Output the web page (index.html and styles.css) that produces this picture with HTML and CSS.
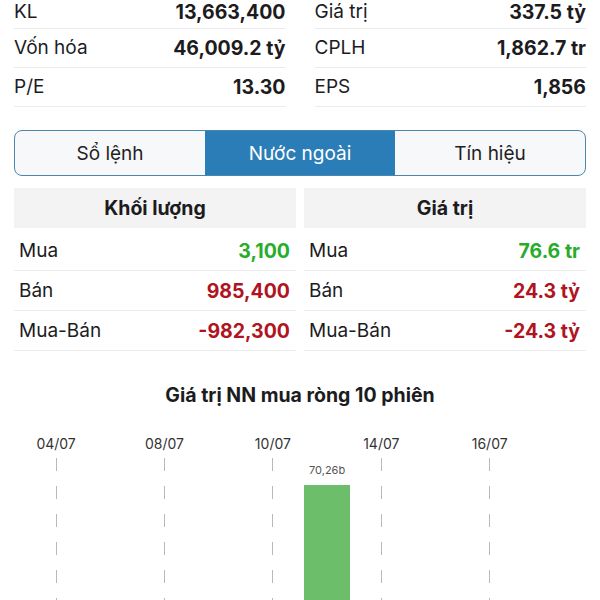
FILE: index.html
```html
<!DOCTYPE html>
<html lang="vi">
<head>
<meta charset="utf-8">
<link rel="stylesheet" href="styles.css">
</head>
<body>
<div class="page">
  <div class="stats">
    <div class="stat-col">
      <div class="stat-row"><span class="label">KL</span><span class="val">13,663,400</span></div>
      <div class="stat-row"><span class="label">Vốn hóa</span><span class="val">46,009.2 tỷ</span></div>
      <div class="stat-row"><span class="label">P/E</span><span class="val">13.30</span></div>
    </div>
    <div class="stat-col">
      <div class="stat-row"><span class="label">Giá trị</span><span class="val">337.5 tỷ</span></div>
      <div class="stat-row"><span class="label">CPLH</span><span class="val">1,862.7 tr</span></div>
      <div class="stat-row"><span class="label">EPS</span><span class="val">1,856</span></div>
    </div>
  </div>

  <div class="tabs">
    <div class="tab">Sổ lệnh</div>
    <div class="tab active">Nước ngoài</div>
    <div class="tab">Tín hiệu</div>
  </div>

  <div class="foreign">
    <div class="fcol">
      <div class="fhead">Khối lượng</div>
      <div class="frow"><span class="label">Mua</span><span class="val up">3,100</span></div>
      <div class="frow"><span class="label">Bán</span><span class="val down">985,400</span></div>
      <div class="frow"><span class="label">Mua-Bán</span><span class="val down">-982,300</span></div>
    </div>
    <div class="fcol">
      <div class="fhead">Giá trị</div>
      <div class="frow"><span class="label">Mua</span><span class="val up">76.6 tr</span></div>
      <div class="frow"><span class="label">Bán</span><span class="val down">24.3 tỷ</span></div>
      <div class="frow"><span class="label">Mua-Bán</span><span class="val down">-24.3 tỷ</span></div>
    </div>
  </div>

  <div class="chart">
    <h2 class="chart-title">Giá trị NN mua ròng 10 phiên</h2>
    <div class="plot">
      <div class="slot"><div class="date">04/07</div><div class="gridline"></div></div>
      <div class="slot"><div class="date"></div></div>
      <div class="slot"><div class="date">08/07</div><div class="gridline"></div></div>
      <div class="slot"><div class="date"></div></div>
      <div class="slot"><div class="date">10/07</div><div class="gridline"></div></div>
      <div class="slot">
        <div class="date"></div>
        <div class="bar-area">
          <div class="bar-label">70,26b</div>
          <div class="bar" style="height:115px"></div>
        </div>
      </div>
      <div class="slot"><div class="date">14/07</div><div class="gridline"></div></div>
      <div class="slot"><div class="date"></div></div>
      <div class="slot"><div class="date">16/07</div><div class="gridline"></div></div>
      <div class="slot"><div class="date"></div></div>
    </div>
  </div>
</div>
</body>
</html>
```
FILE: styles.css
```css
html, body {
  margin: 0;
  padding: 0;
  background: #ffffff;
  overflow: hidden;
}
body {
  font-family: "Inter", "Roboto", "Liberation Sans", sans-serif;
  color: #1c1c1e;
}
.page {
  padding: 0 14px;
}

/* top stats (list is scrolled: first row partly above the view) */
.stats {
  display: flex;
  gap: 29px;
}
.stat-col {
  flex: 1;
}
.stat-row {
  display: flex;
  justify-content: space-between;
  align-items: center;
  height: 38px;
  border-bottom: 1px solid #ececec;
}
.stat-row:first-child {
  height: 26px;
  padding-top: 2px;
  align-items: flex-start;
}
.label {
  font-size: 19px;
  line-height: 20px;
  font-weight: 400;
  color: #1c1c1e;
}
.val {
  font-size: 19.5px;
  line-height: 20px;
  font-weight: 700;
  color: #1c1c1e;
}

/* tabs */
.tabs {
  margin-top: 23px;
  display: flex;
  height: 44px;
  border: 1px solid #4a86ad;
  border-radius: 8px;
  overflow: hidden;
  background: #f6f8f9;
}
.tab {
  flex: 1;
  display: flex;
  align-items: center;
  justify-content: center;
  font-size: 19px;
  color: #1f1f1f;
}
.tab.active {
  background: #2b7db8;
  color: #ffffff;
}

/* foreign table */
.foreign {
  margin-top: 12px;
  display: flex;
  gap: 8px;
}
.fcol {
  flex: 1;
}
.fhead {
  height: 40px;
  display: flex;
  align-items: center;
  justify-content: center;
  background: #f3f3f3;
  font-size: 19.5px;
  font-weight: 700;
  margin-bottom: 3px;
}
.frow {
  display: flex;
  justify-content: space-between;
  align-items: center;
  height: 39px;
  padding: 0 6px 0 5px;
  border-bottom: 1px solid #ececec;
}
.val.up {
  color: #27ad2a;
}
.val.down {
  color: #b0141f;
}

/* chart */
.chart-title {
  margin: 32px 0 0;
  text-align: center;
  font-size: 19.5px;
  line-height: 24px;
  font-weight: 700;
  color: #1c1c1e;
}
.plot {
  margin: 27px 15px 0;
  display: grid;
  grid-template-columns: repeat(10, 1fr);
  height: 166px;
}
.slot {
  display: flex;
  flex-direction: column;
  align-items: center;
}
.date {
  height: 20px;
  line-height: 20px;
  font-size: 14px;
  color: #333333;
  white-space: nowrap;
}
.gridline {
  margin-top: 4px;
  flex: 1;
  width: 1px;
  background: repeating-linear-gradient(to bottom, #b8b8b8 0 13px, transparent 13px 28px);
}
.bar-area {
  flex: 1;
  display: flex;
  flex-direction: column;
  align-items: center;
  justify-content: flex-end;
}
.bar-label {
  font-size: 11px;
  line-height: 14px;
  color: #555555;
  margin-bottom: 8px;
}
.bar {
  width: 46px;
  background: #6dbe6a;
}
```
